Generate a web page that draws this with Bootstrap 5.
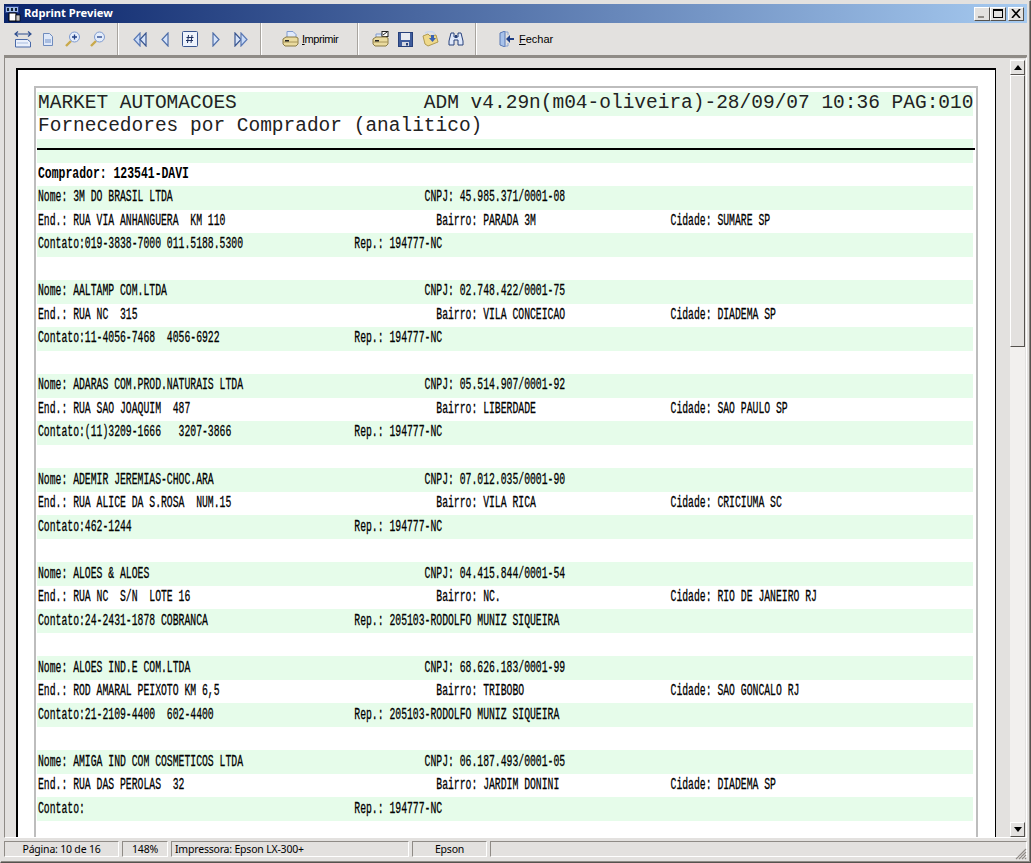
<!DOCTYPE html>
<html lang="pt">
<head>
  <meta charset="UTF-8">
  <title>Rdprint Preview</title>
  <link href="https://cdn.jsdelivr.net/npm/bootstrap@5.3.0/dist/css/bootstrap.min.css" rel="stylesheet">
  <style>
    html, body { height: 100%; }
    body { margin: 0; background: #e3e1df; overflow: hidden; font-family: "Noto Sans", "Liberation Sans", sans-serif; font-size: 11px; color: #000; }
    .win-frame { height: 863px; border: 1px solid #e3e1df; border-right-color: #55524e; border-bottom-color: #55524e; box-shadow: inset -1px -1px 0 #8f8b86; padding: 3px 3px 2px 3px; }
    .title-bar { height: 19px; background: linear-gradient(90deg, #0a246a, #a6caf0); color: #fff; font-weight: 700; font-size: 11.2px; padding-left: 1px; flex: none; }
    .app-ico { width: 16px; height: 16px; margin-right: 3px; }
    .win-btn { width: 16px; height: 14px; background: #e3e1df; border: 1px solid; border-color: #fff #55524e #55524e #fff; display: flex; align-items: center; justify-content: center; padding: 0; }
    .win-btn svg { display: block; }
    .win-btn.gap-left { margin-left: 2px; }
    .btn-set { margin-right: 3px; }
    .tool-bar { height: 34px; border-bottom: 2px solid #8f8b86; flex: none; }
    .tool-grp { height: 32px; display: flex; align-items: center; border-right: 1px solid #a8a49f; box-shadow: 1px 0 0 #fff; flex: none; }
    .grp-a { width: 114px; padding-left: 6px; }
    .grp-b { width: 143px; padding-left: 9px; }
    .grp-c { width: 97px; padding-left: 21px; }
    .grp-d { width: 118px; padding-left: 10px; }
    .grp-e { padding-left: 23px; border-right: 0; box-shadow: none; }
    .tool-slot { width: 25px; height: 24px; display: flex; align-items: center; justify-content: center; flex: none; }
    .grp-b .tool-slot { width: 25.4px; }
    .tool-slot svg { display: block; }
    .tool-txt { margin-left: 4px; font: 11px "Liberation Sans", sans-serif; }
    .txt-tight { margin-left: 3px; letter-spacing: -.45px; }
    .preview-wrap { min-height: 0; border: 1px solid; border-color: #8f8b86 #fff #fff #8f8b86; }
    .preview-area { flex: 1 1 0; min-width: 0; padding: 10px 14px 0 11px; overflow: hidden; }
    .sheet { height: 800px; border: 1px solid #000; border-top-width: 2px; border-left-width: 2px; background: #fff; padding: 16px 17px 0 16px; }
    .margin-box { height: 800px; border: 1px solid #bdbdbd; border-width: 2px 2px 0 2px; padding: 4px 3px 0 1px; overflow: hidden; }
    .line-row { height: 23.53px; display: flex; align-items: center; padding-left: 1px; }
    .line-row:nth-child(odd) { background: #e6fcea; }
    .line-big { font: 19.49px/1 "Liberation Mono", monospace; color: #222; white-space: pre; margin-top: -1px; }
    .line-small { font: 16px/1 "Liberation Mono", monospace; white-space: pre; transform: scaleX(.61); transform-origin: left center; -webkit-text-stroke: .3px #000; margin-top: -1px; }
    .line-head { font: 700 16.5px/1 "Liberation Mono", monospace; white-space: pre; transform: scaleX(.693); transform-origin: left center; }
    .rule-mark { height: 2px; width: calc(100% + 3px); background: #000; margin-top: -4px; margin-left: -1px; flex: none; }
    .scroll-col { flex: none; width: 15px; margin: 1px 1px 0 0; padding-top: 1px; background: #f2f0ee; }
    .scroll-btn { height: 15px; background: #e3e1df; border: 1px solid; border-color: #fff #55524e #55524e #fff; display: flex; align-items: center; justify-content: center; flex: none; }
    .scroll-thumb { height: 272px; background: #e3e1df; border: 1px solid; border-color: #fff #55524e #55524e #fff; flex: none; }
    .status-bar { height: 19px; margin-top: 3px; gap: 3px; flex: none; }
    .stat-cell { border: 1px solid; border-color: #8f8b86 #fff #fff #8f8b86; height: 16px; line-height: 15px; white-space: nowrap; text-align: center; font-size: 10.5px; letter-spacing: -.2px; }
    .c-page { width: 115px; } .c-zoom { width: 46px; } .c-prn { width: 238px; text-align: left; padding-left: 3px; } .c-drv { width: 75px; }
    .grip { position: absolute; right: 0; bottom: 0; }
  </style>
</head>
<body>
<div class="win-frame d-flex flex-column">
  <div class="title-bar d-flex align-items-center">
    <svg class="app-ico" viewBox="0 0 16 16"><rect x="0" y="0" width="14" height="7" fill="#27408f"/><rect x="1" y="1" width="12" height="5" fill="#9db8e6"/><rect x="2" y="2" width="2" height="3" fill="#123"/><rect x="6" y="2" width="2" height="3" fill="#123"/><rect x="10" y="2" width="2" height="3" fill="#123"/><rect x="4" y="7" width="7" height="8" fill="#fff" stroke="#000"/><rect x="11" y="9" width="4" height="6" fill="#c9c7c3" stroke="#000" stroke-width=".7"/></svg>
    <span>Rdprint Preview</span>
    <div class="ms-auto d-flex btn-set">
      <button class="win-btn"><svg width="10" height="9"><rect x="1" y="7" width="6" height="2" fill="#8f8b86"/></svg></button>
      <button class="win-btn"><svg width="10" height="9"><rect x=".5" y=".5" width="9" height="8" fill="none" stroke="#000"/><rect x="0" y="0" width="10" height="2"/></svg></button>
      <button class="win-btn gap-left"><svg width="10" height="9"><path d="M1 0l8 9M9 0l-8 9" stroke="#000" stroke-width="1.6" fill="none"/></svg></button>
    </div>
  </div>
  <div class="tool-bar d-flex">
    <div class="tool-grp grp-a">
      <div class="tool-slot"><svg width="18" height="17" viewBox="0 0 18 17"><path d="M1 3h16M4 .5L1 3l3 2.500M14 .5L17 3l-3 2.500" fill="none" stroke="#2f4f8f" stroke-width="1.2"/><path d="M1.500 8.500h12l3 2.500v5h-15z" fill="#eaf0fb" stroke="#4a6aa8"/><path d="M3 12h11" stroke="#a9bde0"/></svg></div>
      <div class="tool-slot"><svg width="12" height="15" viewBox="0 0 12 15"><path d="M1.500 1.500h6l3 3v9h-9z" fill="#dfe8f8" stroke="#6f8bbd"/><path d="M3 7h6v4H3z" fill="#a9bde0"/></svg></div>
      <div class="tool-slot"><svg width="17" height="17" viewBox="0 0 17 17"><path d="M7 10l-5 5" stroke="#c9a94a" stroke-width="2.400"/><circle cx="10.500" cy="6" r="5" fill="#e4edfb" stroke="#7f9bd0"/><path d="M8 6h5M10.500 3.500v5" stroke="#1f3f86" stroke-width="1.300"/></svg></div>
      <div class="tool-slot"><svg width="17" height="17" viewBox="0 0 17 17"><path d="M7 10l-5 5" stroke="#c9a94a" stroke-width="2.400"/><circle cx="10.500" cy="6" r="5" fill="#e4edfb" stroke="#7f9bd0"/><path d="M8 6h5" stroke="#1f3f86" stroke-width="1.300"/></svg></div>
    </div>
    <div class="tool-grp grp-b">
      <div class="tool-slot"><svg width="14" height="15" viewBox="0 0 14 15"><path d="M7 1v13L1 7.500z" fill="#c9dbf8" stroke="#5a78b4" stroke-width="1.200"/><path d="M13 1v13L7 7.500z" fill="#d7e4fa" stroke="#39558f" stroke-width="1.200"/></svg></div>
      <div class="tool-slot"><svg width="8" height="15" viewBox="0 0 8 15"><path d="M7 1v13L1 7.500z" fill="#d7e4fa" stroke="#4f6ea8" stroke-width="1.200"/></svg></div>
      <div class="tool-slot"><svg width="16" height="16" viewBox="0 0 16 16"><rect x=".5" y=".5" width="15" height="15" rx="1" fill="#eef3fc" stroke="#39558f"/><path d="M6.500 4l-1 8M10 4l-1 8M4.500 6.500h7M4 9.500h7" stroke="#1d2f5f" fill="none"/></svg></div>
      <div class="tool-slot"><svg width="8" height="15" viewBox="0 0 8 15"><path d="M1 1v13l6-6.500z" fill="#d7e4fa" stroke="#4f6ea8" stroke-width="1.200"/></svg></div>
      <div class="tool-slot"><svg width="14" height="15" viewBox="0 0 14 15"><path d="M1 1v13l6-6.500z" fill="#d7e4fa" stroke="#39558f" stroke-width="1.200"/><path d="M7 1v13l6-6.500z" fill="#c9dbf8" stroke="#5a78b4" stroke-width="1.200"/></svg></div>
    </div>
    <div class="tool-grp grp-c">
      <svg width="17" height="16" viewBox="0 0 17 16"><path d="M5 .5h6l3 3v5H5z" fill="#dfe9fb" stroke="#7f9bd0"/><path d="M1 8l3-2h10l2 1v6l-2 2H3l-2-2z" fill="#eadb9f" stroke="#8a7b45"/><path d="M1 11h15" stroke="#a8965a"/><rect x="3" y="9" width="4" height="1.500" fill="#222"/></svg>
      <span class="tool-txt txt-tight"><u>I</u>mprimir</span>
    </div>
    <div class="tool-grp grp-d">
      <div class="tool-slot"><svg width="17" height="16" viewBox="0 0 17 16"><path d="M4 3h6v5H4z" fill="#dfe9fb" stroke="#7f9bd0"/><rect x="10" y=".5" width="6" height="5" fill="#fff" stroke="#222"/><path d="M11 4l4-3" stroke="#222"/><path d="M1 8l3-2h10l2 1v6l-2 2H3l-2-2z" fill="#eadb9f" stroke="#8a7b45"/><path d="M1 11h15" stroke="#a8965a"/><rect x="3" y="9" width="4" height="1.500" fill="#222"/></svg></div>
      <div class="tool-slot"><svg width="15" height="15" viewBox="0 0 15 15"><rect x=".5" y=".5" width="14" height="14" fill="#3f5c9c" stroke="#27407a"/><rect x="3" y="1" width="9" height="7" fill="#e8eaf0"/><rect x="4" y="10" width="7" height="4" fill="#d6d9e2"/><rect x="8" y="11" width="2" height="2.500" fill="#27407a"/></svg></div>
      <div class="tool-slot"><svg width="17" height="16" viewBox="0 0 17 16"><path d="M1 5l5-2 2 2 6-1 2 7-10 4-3-2z" fill="#efd98a" stroke="#b09a50"/><path d="M3 2c4-2 8-2 10 1" fill="none" stroke="#c8d6ee" stroke-width="1.500"/><path d="M9 4h3v3h2l-3.500 4L7 7h2z" fill="#3a62b4"/></svg></div>
      <div class="tool-slot"><svg width="16" height="14" viewBox="0 0 16 14"><path d="M3 1h3v4h4V1h3l2 8v4h-5V8H6v5H1V9z" fill="#dfe8fa" stroke="#27407a"/><path d="M7 3h2v3H7z" fill="#27407a"/></svg></div>
    </div>
    <div class="tool-grp grp-e">
      <svg width="16" height="16" viewBox="0 0 16 16"><path d="M1 2l5-2v16l-5-2z" fill="#a8c2ea" stroke="#5a78b4"/><path d="M6 1h3v3M9 12v3H6" fill="none" stroke="#8aa4d4"/><path d="M15 7H11V4L7 8l4 4V9h4z" fill="#1f3f86"/></svg>
      <span class="tool-txt"><u>F</u>echar</span>
    </div>
  </div>
  <div class="preview-wrap flex-grow-1 d-flex">
    <div class="preview-area">
      <div class="sheet">
        <div class="margin-box" id="page-lines"></div>
      </div>
    </div>
    <div class="scroll-col d-flex flex-column">
      <div class="scroll-btn"><svg width="8" height="5"><path d="M4 0l4 5H0z"/></svg></div>
      <div class="scroll-thumb"></div>
      <div class="scroll-btn mt-auto"><svg width="8" height="5"><path d="M0 0h8L4 5z"/></svg></div>
    </div>
  </div>
  <div class="status-bar d-flex position-relative">
    <div class="stat-cell c-page">Página: 10 de 16</div>
    <div class="stat-cell c-zoom">148%</div>
    <div class="stat-cell c-prn">Impressora: Epson LX-300+</div>
    <div class="stat-cell c-drv">Epson</div>
    <div class="stat-cell flex-grow-1"></div>
    <svg class="grip" width="12" height="12" viewBox="0 0 12 12"><path d="M11 1L1 11M11 4l-7 7M11 7l-4 4M11 10l-1 1" stroke="#8f8b86" stroke-width="1.100"/></svg>
  </div>
</div>
<script>
const forn = [
  ['3M DO BRASIL LTDA', '45.985.371/0001-08', 'RUA VIA ANHANGUERA  KM 110', 'PARADA 3M', 'SUMARE SP', '019-3838-7000 011.5188.5300', '194777-NC'],
  ['AALTAMP COM.LTDA', '02.748.422/0001-75', 'RUA NC  315', 'VILA CONCEICAO', 'DIADEMA SP', '11-4056-7468  4056-6922', '194777-NC'],
  ['ADARAS COM.PROD.NATURAIS LTDA', '05.514.907/0001-92', 'RUA SAO JOAQUIM  487', 'LIBERDADE', 'SAO PAULO SP', '(11)3209-1666   3207-3866', '194777-NC'],
  ['ADEMIR JEREMIAS-CHOC.ARA', '07.012.035/0001-90', 'RUA ALICE DA S.ROSA  NUM.15', 'VILA RICA', 'CRICIUMA SC', '462-1244', '194777-NC'],
  ['ALOES & ALOES', '04.415.844/0001-54', 'RUA NC  S/N  LOTE 16', 'NC.', 'RIO DE JANEIRO RJ', '24-2431-1878 COBRANCA', '205103-RODOLFO MUNIZ SIQUEIRA'],
  ['ALOES IND.E COM.LTDA', '68.626.183/0001-99', 'ROD AMARAL PEIXOTO KM 6,5', 'TRIBOBO', 'SAO GONCALO RJ', '21-2109-4400  602-4400', '205103-RODOLFO MUNIZ SIQUEIRA'],
  ['AMIGA IND COM COSMETICOS LTDA', '06.187.493/0001-05', 'RUA DAS PEROLAS  32', 'JARDIM DONINI', 'DIADEMA SP', '', '194777-NC']
];

function row(cls, text) {
  const d = document.createElement('div');
  d.className = 'line-row';
  if (cls) {
    const s = document.createElement('span');
    s.className = cls;
    s.textContent = text;
    d.appendChild(s);
  }
  return d;
}

const box = document.getElementById('page-lines');
box.appendChild(row('line-big', 'MARKET AUTOMACOES'.padEnd(33) + 'ADM v4.29n(m04-oliveira)-28/09/07 10:36 PAG:010'));
box.appendChild(row('line-big', 'Fornecedores por Comprador (analitico)'));
const ruleRow = row();
ruleRow.innerHTML = '<div class="rule-mark"></div>';
box.appendChild(ruleRow);
box.appendChild(row('line-head', 'Comprador: 123541-DAVI'));
forn.forEach(f => {
  box.appendChild(row('line-small', ('Nome: ' + f[0]).padEnd(66) + 'CNPJ: ' + f[1]));
  box.appendChild(row('line-small', ('End.: ' + f[2]).padEnd(68) + ('Bairro: ' + f[3]).padEnd(40) + 'Cidade: ' + f[4]));
  box.appendChild(row('line-small', ('Contato:' + f[5]).padEnd(54) + 'Rep.: ' + f[6]));
  box.appendChild(row());
});
</script>
<script src="https://cdn.jsdelivr.net/npm/bootstrap@5.3.0/dist/js/bootstrap.bundle.min.js"></script>
</body>
</html>
